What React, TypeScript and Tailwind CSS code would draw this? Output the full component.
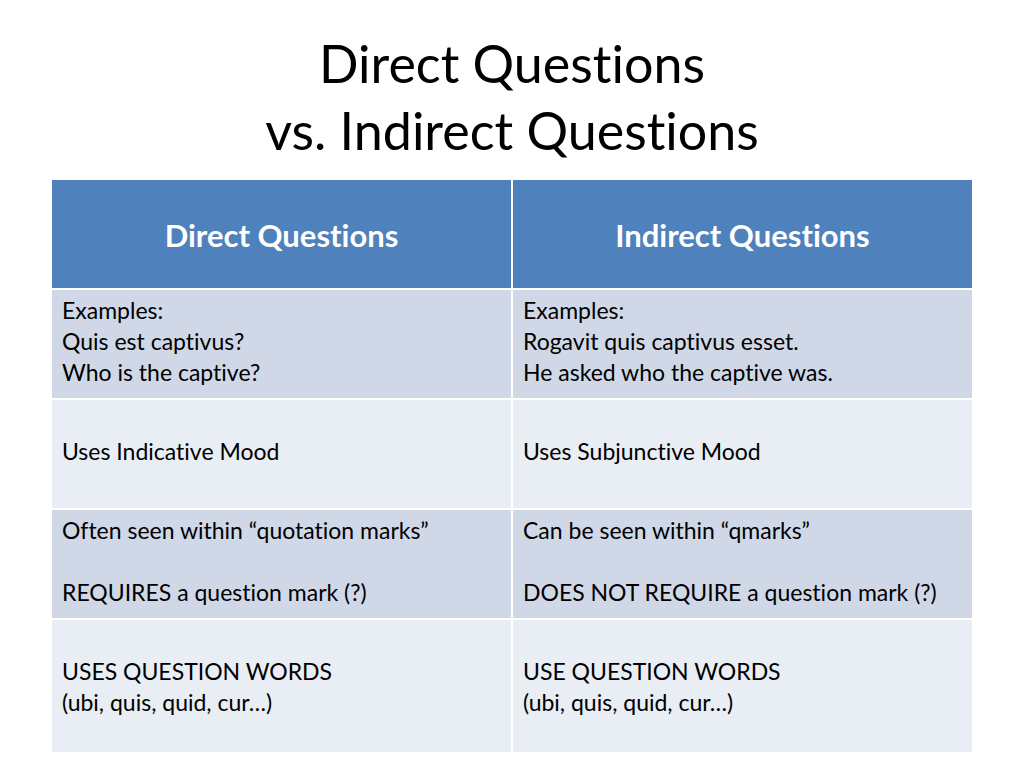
import React from "react";

const font = { fontFamily: "Lato, 'Noto Sans', sans-serif" };

function Cell({ lines, bg, last }: { lines: string[]; bg: string; last?: boolean }) {
  return (
    <div className={`${bg} ${last ? "h-[132px]" : "h-[108px]"} pl-[10px] pt-[5px] text-[23px] leading-[31px] text-black`}>
      {lines.map((l, i) => (
        <div key={i} className="h-[31px] whitespace-pre">{l || "\u00a0"}</div>
      ))}
    </div>
  );
}

export default function App() {
  const rows: { a: string[]; b: string[]; bg: string; last?: boolean }[] = [
    {
      a: ["Examples:", "Quis est captivus?", "Who is the captive?"],
      b: ["Examples:", "Rogavit quis captivus esset.", "He asked who the captive was."],
      bg: "bg-[#d0d8e8]",
    },
    { a: ["", "Uses Indicative Mood"], b: ["", "Uses Subjunctive Mood"], bg: "bg-[#e9edf4]" },
    {
      a: ["Often seen within \u201cquotation marks\u201d", "", "REQUIRES a question mark (?)"],
      b: ["Can be seen within \u201cqmarks\u201d", "", "DOES NOT REQUIRE a question mark (?)"],
      bg: "bg-[#d0d8e8]",
    },
    {
      a: ["", "USES QUESTION WORDS", "(ubi, quis, quid, cur\u2026)"],
      b: ["", "USE QUESTION WORDS", "(ubi, quis, quid, cur\u2026)"],
      bg: "bg-[#e9edf4]",
      last: true,
    },
  ];
  return (
    <div
      className="w-[1024px] h-[768px] bg-white overflow-hidden [font-variant-ligatures:none] [font-feature-settings:'liga'_0,'calt'_0,'dlig'_0]"
      style={font}
    >
      <div className="pt-[30px] h-[180px] text-center text-[52px] leading-[67px] text-black">
        <div>Direct Questions</div>
        <div>vs. Indirect Questions</div>
      </div>
      <div className="ml-[52px] w-[920px] flex flex-col gap-[2px]">
        <div className="grid grid-cols-2 gap-[2px] h-[108px]">
          <div className="bg-[#4f81bd] flex items-center justify-center text-white font-bold text-[31px] pt-[2px]">Direct Questions</div>
          <div className="bg-[#4f81bd] flex items-center justify-center text-white font-bold text-[31px] pt-[2px]">Indirect Questions</div>
        </div>
        {rows.map((r, i) => (
          <div key={i} className="grid grid-cols-2 gap-[2px]">
            <Cell lines={r.a} bg={r.bg} last={r.last} />
            <Cell lines={r.b} bg={r.bg} last={r.last} />
          </div>
        ))}
      </div>
    </div>
  );
}
